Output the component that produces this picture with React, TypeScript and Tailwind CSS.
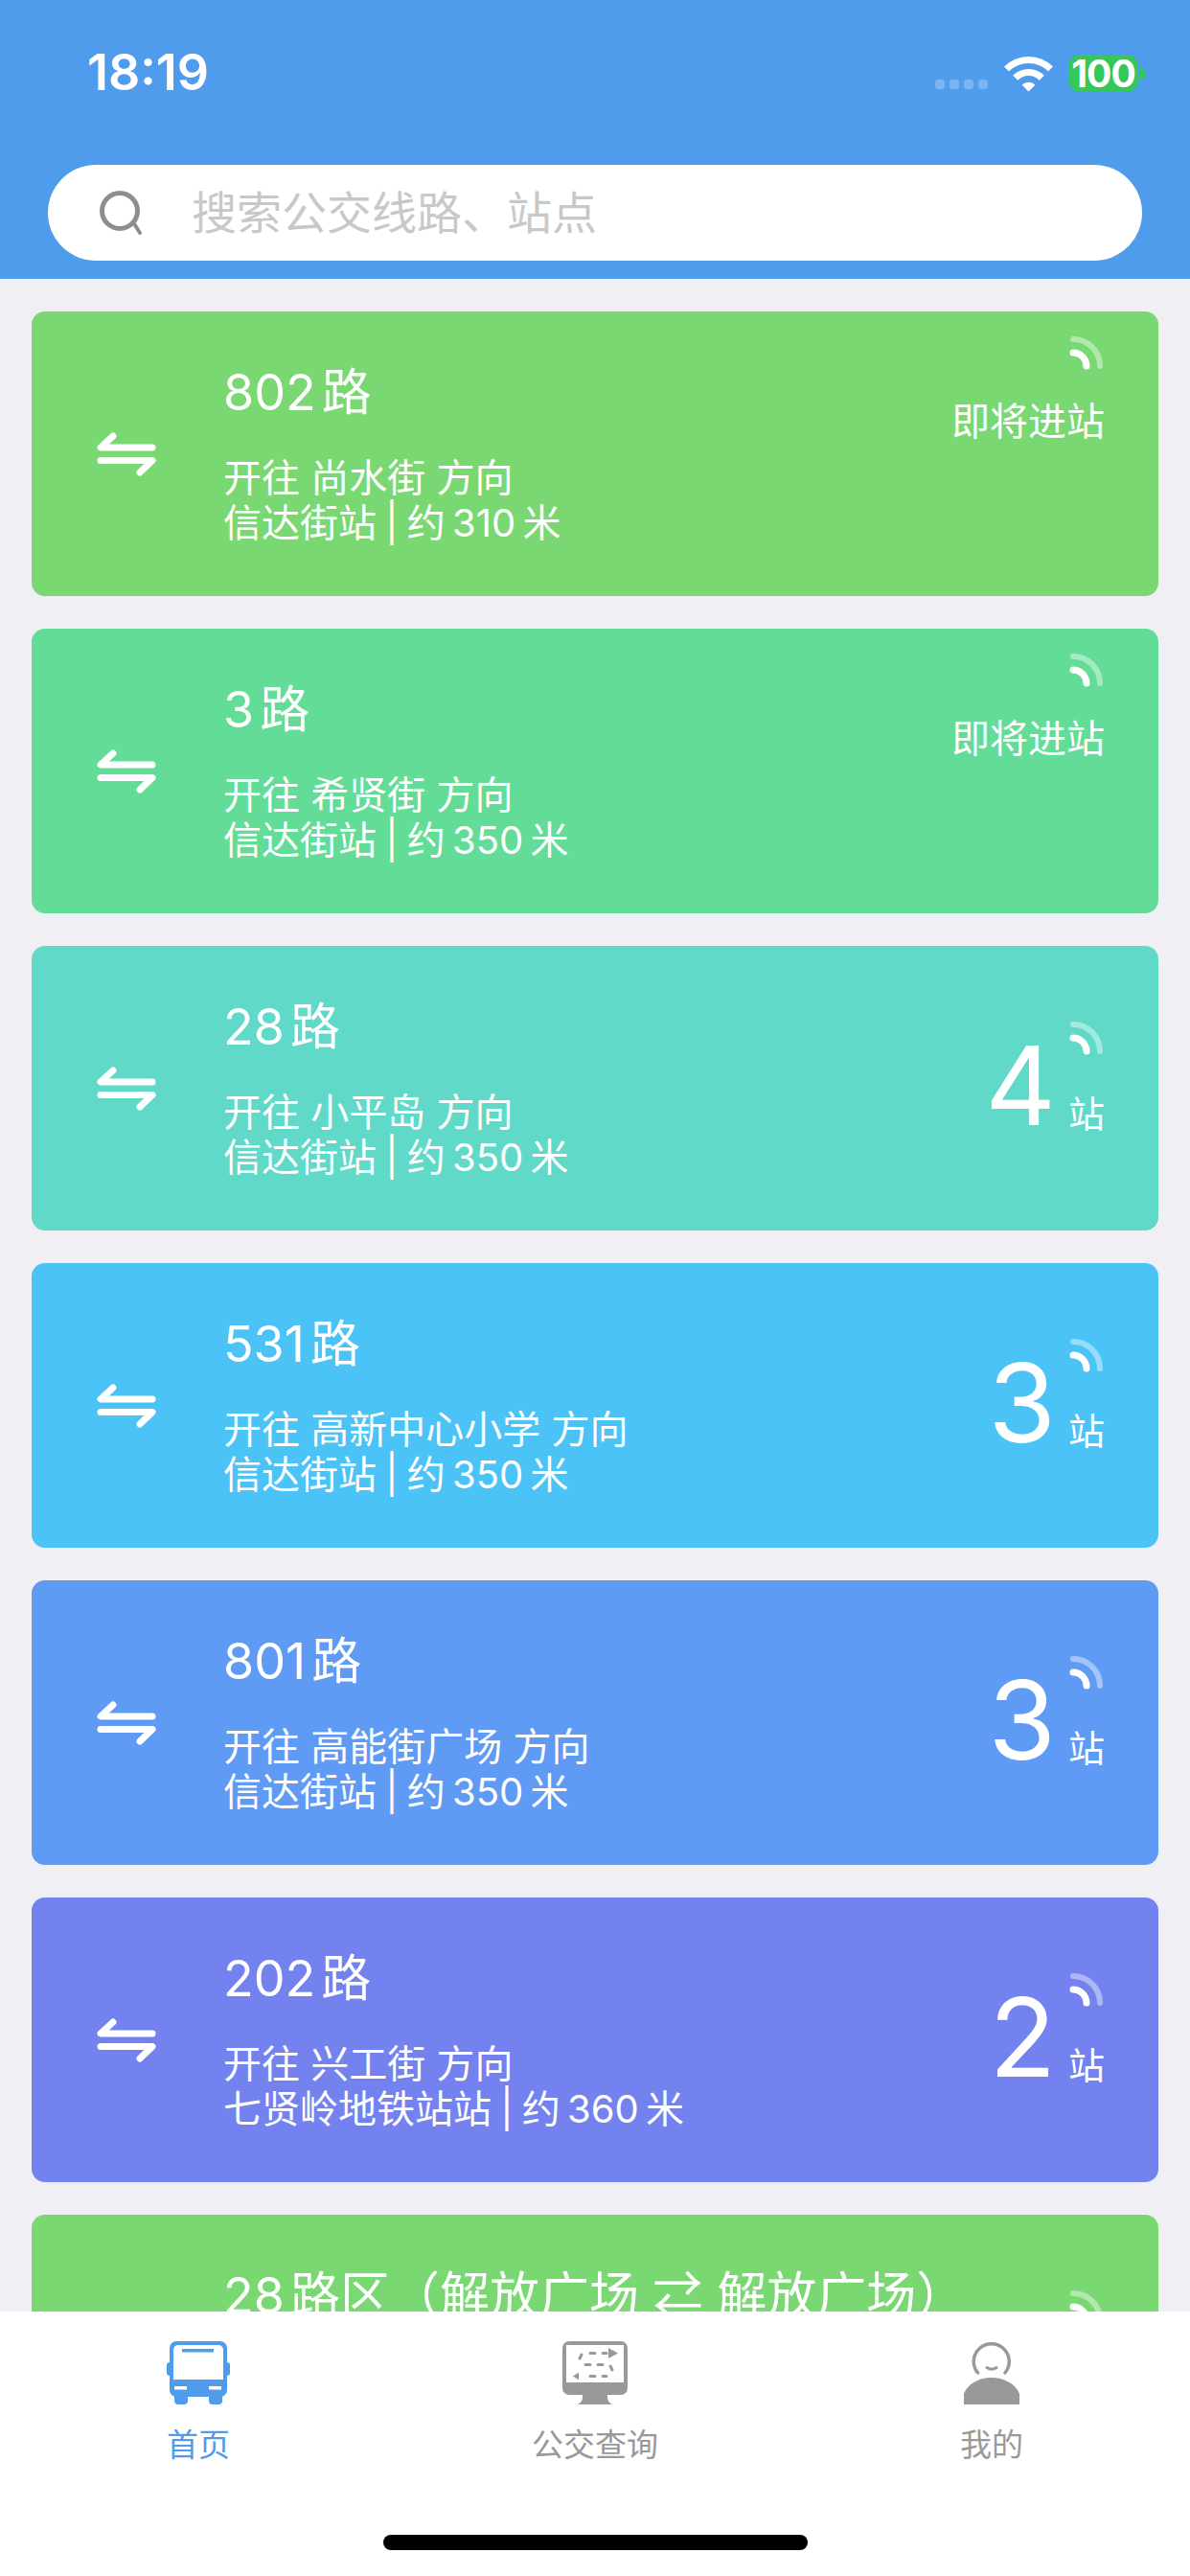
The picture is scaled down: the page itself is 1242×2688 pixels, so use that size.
const routes = [
  { color: "bg-[#79d871]", num: "802", suffix: "路", dest: "尚水街", station: "信达街站", dist: "310", soon: true },
  { color: "bg-[#62dc97]", num: "3", suffix: "路", dest: "希贤街", station: "信达街站", dist: "350", soon: true },
  { color: "bg-[#60d9c8]", num: "28", suffix: "路", dest: "小平岛", station: "信达街站", dist: "350", stops: "4" },
  { color: "bg-[#4cc3f6]", num: "531", suffix: "路", dest: "高新中心小学", station: "信达街站", dist: "350", stops: "3" },
  { color: "bg-[#5f9af5]", num: "801", suffix: "路", dest: "高能街广场", station: "信达街站", dist: "350", stops: "3" },
  { color: "bg-[#7382ef]", num: "202", suffix: "路", dest: "兴工街", station: "七贤岭地铁站站", dist: "360", stops: "2" },
  { color: "bg-[#79d871]", num: "28", suffix: "路区（解放广场 ⇄ 解放广场）", dest: "解放广场", station: "信达街站", dist: "350", stops: "3" },
];

function Signal() {
  return (
    <svg width="36" height="36" viewBox="0 0 36 36" fill="none" strokeLinecap="round" className="block mr-[1px]">
      <path d="M4 4A28 28 0 0 1 32 32" stroke="#fff" strokeOpacity="0.42" strokeWidth="6" />
      <path d="M4 18A14 14 0 0 1 18 32" stroke="#fff" strokeWidth="7" />
    </svg>
  );
}

function Swap() {
  return (
    <svg width="62" height="46" viewBox="0 0 62 46" fill="none" stroke="#fff" strokeWidth="7" strokeLinecap="round" strokeLinejoin="round" className="block">
      <path d="M17 4 4 16H58" />
      <path d="M45 42 58 29.500H4" />
    </svg>
  );
}

function RouteCard({ r }: { r: (typeof routes)[number] }) {
  return (
    <div className={`${r.color} h-[297px] shrink-0 rounded-[14px] flex justify-between pl-[68px] pr-[56px]`}>
      <div className="flex items-center min-w-0">
        <div className="w-[132px] shrink-0"><Swap /></div>
        <div className="text-white whitespace-nowrap font-normal">
          <div className="text-[52px] leading-[60px] pt-[1px]">
            <span className="mr-[6px]">{r.num}</span>{r.suffix}
          </div>
          <div className="mt-[35px] text-[40px] leading-[47px]">开往 {r.dest} 方向</div>
          <div className="text-[40px] leading-[47px]">
            <span className="[word-spacing:-2px]">{r.station} | 约</span>
            <span className="[word-spacing:-4px]"> {r.dist} 米</span>
          </div>
        </div>
      </div>
      {r.soon ? (
        <div className="flex flex-col items-end pt-[25px] text-white shrink-0">
          <Signal />
          <div className="mt-[30px] text-[40px] leading-[47px]">即将进站</div>
        </div>
      ) : (
        <div className="flex items-start pt-[78px] text-white shrink-0">
          <div className="text-[114px] leading-[120px] font-normal mr-[13px] mt-[8px]">{r.stops}</div>
          <div className="flex flex-col items-end">
            <Signal />
            <div className="mt-[38px] text-[38px] leading-[47px]">站</div>
          </div>
        </div>
      )}
    </div>
  );
}

function BusIcon() {
  return (
    <svg width="66" height="66" viewBox="0 0 66 66" className="block">
      <rect x="0" y="22" width="8" height="14" rx="3" fill="#4f9cec" />
      <rect x="58" y="22" width="8" height="14" rx="3" fill="#4f9cec" />
      <rect x="8" y="50" width="14" height="16" rx="4" fill="#4f9cec" />
      <rect x="44" y="50" width="14" height="16" rx="4" fill="#4f9cec" />
      <rect x="3" y="0" width="60" height="58" rx="7" fill="#4f9cec" />
      <path d="M7 9a5 5 0 0 1 5-5h42a5 5 0 0 1 5 5v31H7z" fill="#fff" />
      <rect x="16" y="8" width="33" height="3.500" fill="#4f9cec" />
      <rect x="8" y="47" width="13" height="3.500" fill="#fff" />
      <rect x="44" y="47" width="13" height="3.500" fill="#fff" />
    </svg>
  );
}

function BoardIcon() {
  return (
    <svg width="68" height="66" viewBox="0 0 68 66" className="block">
      <path d="M21 54h26v5c0 3 2 5 5 7H16c3-2 5-4 5-7z" fill="#999" />
      <rect x="0" y="0" width="68" height="56" rx="7" fill="#999" />
      <rect x="4" y="4" width="60" height="39" fill="#fff" />
      <g stroke="#999" strokeWidth="3" strokeLinecap="round" fill="none">
        <path d="M29 12.500h5M42 12.500h4M18 18l2-4M24 24.500h5M37 24.500h5M50 26l2 4M29 36.500h5M42 36.500h4" />
      </g>
      <path d="M48 7l10 5.500-10 5.500z" fill="#999" />
      <path d="M11 36.500l6-4v8z" fill="#999" />
    </svg>
  );
}

function UserIcon() {
  return (
    <svg width="58" height="66" viewBox="0 0 58 66" className="block">
      <path d="M14.500 33A18.500 18.500 0 1 1 43 33" fill="none" stroke="#999" strokeWidth="3.500" strokeLinecap="round" />
      <path d="M24 27.500c3 2 7 2 10 0" fill="none" stroke="#999" strokeWidth="3" strokeLinecap="round" />
      <path d="M0 66V55C4 44 17 38 29 38s25 6 29 17v11z" fill="#999" />
    </svg>
  );
}

function Wifi() {
  return (
    <svg width="51" height="38" viewBox="0 0 51 38" fill="none" stroke="#fff" strokeWidth="7" className="block">
      <path d="M2.500 14A32.500 32.500 0 0 1 48.500 14" />
      <path d="M11.700 23.200A19.500 19.500 0 0 1 39.300 23.200" />
      <path d="M18.500 30.500 25.500 37.500 32.500 30.500A10 10 0 0 0 18.500 30.500Z" fill="#fff" stroke="none" />
    </svg>
  );
}

function Tab({ label, active, children }: { label: string; active?: boolean; children: React.ReactNode }) {
  return (
    <div className="flex flex-col items-center">
      {children}
      <div className={`mt-[20px] text-[33px] leading-[44px] ${active ? "text-[#4f9cec]" : "text-[#999999]"}`}>{label}</div>
    </div>
  );
}

export default function App() {
  return (
    <div className="w-[1242px] h-[2688px] bg-[#efeff4] flex flex-col overflow-hidden font-[Inter,'Noto_Sans_CJK_SC',sans-serif]">
      <div className="h-[291px] shrink-0 bg-[#4f9cec] pt-[52px]">
        <div className="h-[48px] flex items-center justify-between pl-[91px] pr-[47px]">
          <span className="text-[52px] leading-[48px] font-semibold text-white">18:19</span>
          <div className="flex items-end h-[40px]">
            <div className="flex gap-[5px] mb-[3px] mr-[17px]">
              <span className="w-[10px] h-[10px] rounded-[3px] bg-white/25" />
              <span className="w-[10px] h-[10px] rounded-[3px] bg-white/25" />
              <span className="w-[10px] h-[10px] rounded-[3px] bg-white/25" />
              <span className="w-[10px] h-[10px] rounded-[3px] bg-white/25" />
            </div>
            <Wifi />
            <div className="ml-[16px] w-[73px] h-[39px] rounded-[12px] bg-[#34c759] flex items-center justify-center text-white font-bold text-[39px] leading-[39px] tracking-[-1px]">100</div>
            <div className="ml-[2px] mb-[12px] w-[5px] h-[14px] rounded-r-full bg-[#34c759]" />
          </div>
        </div>
        <div className="mt-[72px] mx-[50px] h-[100px] rounded-full bg-white flex items-center pl-[53px]">
          <svg width="46" height="46" viewBox="0 0 46 46" fill="none" className="block shrink-0">
            <circle cx="22" cy="21" r="18.500" stroke="#8e8e8e" strokeWidth="5" />
            <path d="M38 36l5 8" stroke="#8e8e8e" strokeWidth="4" strokeLinecap="round" />
          </svg>
          <span className="ml-[51px] text-[47px] leading-[60px] text-[#c8c8c8]">搜索公交线路、站点</span>
        </div>
      </div>

      <div className="flex-1 min-h-0 overflow-hidden flex flex-col gap-[34px] pt-[34px] px-[33px]">
        {routes.map((r, i) => (
          <RouteCard key={i} r={r} />
        ))}
      </div>

      <div className="h-[276px] shrink-0 bg-white flex flex-col">
        <div className="grid grid-cols-3 pt-[31px]">
          <Tab label="首页" active><BusIcon /></Tab>
          <Tab label="公交查询"><BoardIcon /></Tab>
          <Tab label="我的"><UserIcon /></Tab>
        </div>
        <div className="mt-auto mb-[27px] self-center w-[443px] h-[16px] rounded-full bg-black" />
      </div>
    </div>
  );
}
